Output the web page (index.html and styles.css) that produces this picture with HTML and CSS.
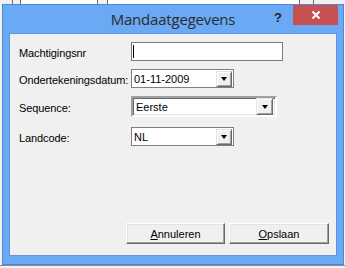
FILE: index.html
```html
<!DOCTYPE html>
<html lang="nl">
<head>
<meta charset="utf-8">
<title>Mandaatgegevens</title>
<link rel="stylesheet" href="styles.css">
</head>
<body>
<div class="dialog">
  <div class="titlebar">
    <div class="tb-left"></div>
    <div class="title">Mandaatgegevens</div>
    <div class="tb-right">
      <span class="help">?</span>
      <span class="close"><svg width="10" height="10" viewBox="0 0 10 10"><path d="M1.5 1.5 L8.5 8.5 M8.5 1.5 L1.5 8.5" stroke="#fff" stroke-width="2"/></svg></span>
    </div>
  </div>
  <div class="content">
    <div class="form">
      <div class="row r1">
        <span class="label">Machtigingsnr</span>
        <div class="edit"><span class="caret"></span></div>
      </div>
      <div class="row r2">
        <span class="label">Ondertekeningsdatum:</span>
        <div class="combo flat narrow"><span class="value">01-11-2009</span><span class="dd"><span class="tri"></span></span></div>
      </div>
      <div class="row r3">
        <span class="label">Sequence:</span>
        <div class="combo sunken wide"><span class="value">Eerste</span><span class="dd"><span class="tri"></span></span></div>
      </div>
      <div class="row r4">
        <span class="label">Landcode:</span>
        <div class="combo flat narrow"><span class="value">NL</span><span class="dd"><span class="tri"></span></span></div>
      </div>
    </div>
    <div class="buttons">
      <button class="btn b1"><u>A</u>nnuleren</button>
      <button class="btn b2"><u>O</u>pslaan</button>
    </div>
  </div>
</div>
</body>
</html>
```
FILE: styles.css
```css
html, body {
  margin: 0;
  padding: 0;
}
body {
  width: 345px;
  height: 268px;
  overflow: hidden;
  font-family: "Liberation Sans", Arial, sans-serif;
  background:
    linear-gradient(#6d6d6d, #6d6d6d) 12px 0 / 1px 4px no-repeat,
    linear-gradient(#6d6d6d, #6d6d6d) 20px 0 / 1px 4px no-repeat,
    linear-gradient(#6d6d6d, #6d6d6d) 97px 0 / 1px 4px no-repeat,
    linear-gradient(#6d6d6d, #6d6d6d) 107px 0 / 1px 4px no-repeat,
    linear-gradient(#6d6d6d, #6d6d6d) 299px 0 / 1px 4px no-repeat,
    linear-gradient(#6d6d6d, #6d6d6d) 313px 0 / 1px 4px no-repeat,
    linear-gradient(#ffffff, #ffffff) 21px 0 / 76px 4px no-repeat,
    linear-gradient(#ffffff, #ffffff) 108px 0 / 191px 4px no-repeat,
    linear-gradient(#8a8a8a, #8a8a8a) 0 265px / 345px 1px no-repeat,
    #f0f0f0;
  display: flex;
  align-items: flex-start;
}
.dialog {
  margin: 4px 0 0 2px;
  width: 342px;
  height: 261px;
  box-sizing: border-box;
  border: 1px solid #4d88d4;
  background: #6aa9f4;
  display: flex;
  flex-direction: column;
  padding: 0 6px 8px 6px;
}
.titlebar {
  height: 28px;
  display: grid;
  grid-template-columns: 1fr auto 1fr;
  align-items: start;
}
.title {
  font-family: "Open Sans", "Noto Sans", sans-serif;
  font-size: 15px;
  color: #2b2b2b;
  line-height: 20px;
  padding-top: 4px;
  letter-spacing: -0.2px;
}
.tb-right {
  display: flex;
  justify-content: flex-end;
  align-items: flex-start;
}
.help {
  font-family: "Liberation Sans", Arial, sans-serif;
  font-weight: bold;
  font-size: 13px;
  color: #222;
  line-height: 14px;
  margin-top: 6px;
  margin-right: 11px;
}
.close {
  width: 45px;
  height: 20px;
  background: #c75050;
  display: flex;
  align-items: center;
  justify-content: center;
  margin-right: -1px;
}
.content {
  flex: 1;
  background: #f0f0f0;
  border: 1px solid #5e96dd;
  display: flex;
  flex-direction: column;
  padding: 8px 7px 11px 9px;
}
.form {
  display: flex;
  flex-direction: column;
}
.row {
  display: flex;
  align-items: center;
}
.r2, .r3 { margin-top: 8px; }
.r4 { margin-top: 10px; }
.label {
  width: 112px;
  font-size: 11px;
  letter-spacing: -0.1px;
  white-space: nowrap;
  color: #000;
  padding-top: 2px;
}
.edit {
  width: 152px;
  height: 19px;
  box-sizing: border-box;
  border: 1px solid #7a7a7a;
  background: #fff;
  display: flex;
  align-items: center;
  padding-left: 1px;
}
.caret {
  width: 1px;
  height: 13px;
  background: #000;
}
.combo {
  box-sizing: border-box;
  background: #fff;
  display: flex;
  align-items: center;
  justify-content: space-between;
  font-size: 11px;
  color: #000;
}
.flat {
  border: 1px solid #7f7f7f;
  height: 19px;
  padding: 0 1px 0 2px;
}
.narrow { width: 103px; }
.sunken {
  width: 146px;
  height: 21px;
  border: 2px solid;
  border-color: #a0a0a0 #ffffff #ffffff #a0a0a0;
  box-shadow: inset 1px 1px #696969, inset -1px -1px #e3e3e3;
  padding: 0 2px 0 3px;
}
.value { padding-top: 1px; }
.dd {
  width: 16px;
  height: 16px;
  box-sizing: border-box;
  background: #f0f0f0;
  border: 1px solid;
  border-color: #e3e3e3 #696969 #696969 #e3e3e3;
  box-shadow: inset 1px 1px #ffffff, inset -1px -1px #a0a0a0;
  display: flex;
  align-items: center;
  justify-content: center;
}
.sunken .dd { width: 17px; height: 17px; }
.tri {
  width: 0;
  height: 0;
  border-left: 3.5px solid transparent;
  border-right: 3.5px solid transparent;
  border-top: 4px solid #000;
  margin-top: 1px;
}
.buttons {
  margin-top: auto;
  display: flex;
  justify-content: flex-end;
  gap: 4px;
}
.btn {
  height: 21px;
  box-sizing: border-box;
  font-family: "Liberation Sans", Arial, sans-serif;
  font-size: 11px;
  color: #000;
  background: #f0f0f0;
  border: 1px solid;
  border-color: #ffffff #696969 #696969 #ffffff;
  box-shadow: inset -1px -1px #a0a0a0, inset 1px 1px #e3e3e3;
  padding: 0;
  margin: 0;
}
.b1 { width: 99px; }
.b2 { width: 100px; }
.btn u { text-decoration: underline; text-underline-offset: 1px; }
```
